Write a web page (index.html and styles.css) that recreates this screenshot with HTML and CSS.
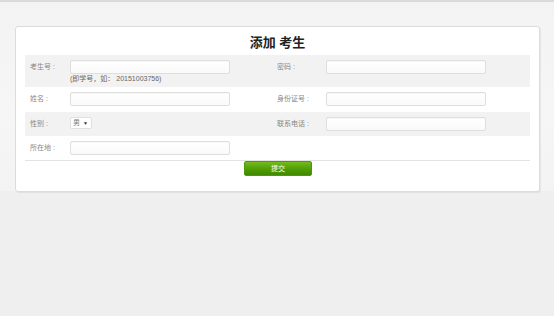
FILE: index.html
```html
<!DOCTYPE html>
<html lang="zh">
<head>
<meta charset="utf-8">
<title>添加 考生</title>
<link rel="stylesheet" href="styles.css">
</head>
<body>
<div class="top">
  <div class="card">
    <h1 class="title">添加 考生</h1>
    <form class="form">
      <div class="row row-tall shade">
        <div class="cell">
          <span class="label">考生号 :</span>
          <div class="field">
            <input class="input" type="text">
            <div class="hint">(即学号，如： 20151003756)</div>
          </div>
        </div>
        <div class="cell">
          <span class="label label-r">密码 :</span>
          <div class="field"><input class="input" type="password"></div>
        </div>
      </div>
      <div class="row row-mid">
        <div class="cell">
          <span class="label">姓名 :</span>
          <div class="field"><input class="input" type="text"></div>
        </div>
        <div class="cell">
          <span class="label label-r">身份证号 :</span>
          <div class="field"><input class="input" type="text"></div>
        </div>
      </div>
      <div class="row shade">
        <div class="cell">
          <span class="label">性别 :</span>
          <div class="field"><div class="select"><span>男</span><span class="caret">▼</span></div></div>
        </div>
        <div class="cell">
          <span class="label label-r">联系电话 :</span>
          <div class="field"><input class="input" type="text"></div>
        </div>
      </div>
      <div class="row">
        <div class="cell">
          <span class="label">所在地 :</span>
          <div class="field"><input class="input" type="text"></div>
        </div>
        <div class="cell"></div>
      </div>
      <div class="actions">
        <button class="btn" type="button">提交</button>
      </div>
    </form>
  </div>
</div>
</body>
</html>
```
FILE: styles.css
```css
html, body {
  margin: 0;
  padding: 0;
}
body {
  background: #efefef;
  font-family: "Liberation Sans", "Noto Sans CJK SC", sans-serif;
  height: 316px;
  overflow: hidden;
}
.top {
  border-top: 2px solid #dadada;
  background: linear-gradient(180deg, #f3f3f3 0%, #f6f6f6 60%, #f3f3f3 100%);
  padding: 24px 14px 0 15px;
  height: 165px;
}
.card {
  background: #fff;
  border: 1px solid #dcdcdc;
  border-radius: 3px;
  box-shadow: 1px 1px 1px rgba(0,0,0,0.06);
  padding: 0 9px 15px 9px;
  height: 149px;
}
.title {
  margin: 0;
  height: 28px;
  line-height: 32px;
  text-align: center;
  font-size: 13px;
  font-weight: bold;
  color: #222;
}
.row {
  display: flex;
  height: 24px;
  padding-left: 5px;
  box-sizing: border-box;
  padding-top: 5px;
}
.row-tall { height: 32px; }
.row-mid { height: 25px; }
.shade { background: #f2f2f2; }
.cell {
  display: flex;
  align-items: flex-start;
  width: 247px;
}
.label {
  width: 40px;
  flex: none;
  font-size: 7px;
  line-height: 14px;
  color: #888;
}
.label-r { width: 49px; }
.field { display: flex; flex-direction: column; }
.input {
  display: block;
  width: 160px;
  height: 14px;
  box-sizing: border-box;
  margin: 0;
  border: 1px solid #dedede;
  border-radius: 2px;
  background: linear-gradient(180deg, #fff 0%, #fafafa 100%);
  box-shadow: inset 0 1px 1px rgba(0,0,0,0.03);
  outline: none;
}
.hint {
  font-size: 7px;
  line-height: 9px;
  color: #666;
}
.select {
  width: 22px;
  height: 12px;
  box-sizing: border-box;
  border: 1px solid #e0e0e0;
  border-radius: 2px;
  background: #fff;
  font-size: 7px;
  line-height: 10px;
  color: #777;
  display: flex;
  gap: 3px;
  padding-left: 2px;
}
.caret { font-size: 5px; color: #333; }
.actions {
  border-top: 1px solid #e3e3e3;
  display: flex;
  justify-content: center;
  padding-top: 0;
}
.btn {
  width: 68px;
  height: 15px;
  margin: 0 0 0 1px;
  padding: 0;
  border: 1px solid #4a9a0c;
  border-radius: 2px;
  background: linear-gradient(180deg, #74bb1c 0%, #4d9a05 60%, #3f8a00 100%);
  color: #fff;
  font-family: "Liberation Sans", "Noto Sans CJK SC", sans-serif;
  font-size: 7px;
  line-height: 13px;
}
```
